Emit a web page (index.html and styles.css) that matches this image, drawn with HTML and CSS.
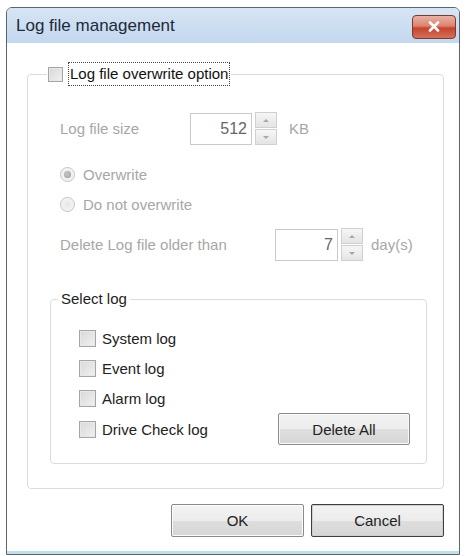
FILE: index.html
```html
<!DOCTYPE html>
<html>
<head>
<meta charset="utf-8">
<title>Log file management</title>
<link rel="stylesheet" href="styles.css">
</head>
<body>
<div class="window">
  <div class="titlebar">
    <span class="title">Log file management</span>
    <span class="close">
      <svg width="12" height="11" viewBox="0 0 12 11"><path d="M2 1.5 L10 9.5 M10 1.5 L2 9.5" stroke="#fff" stroke-width="2.6" stroke-linecap="round"/></svg>
    </span>
  </div>
  <div class="client">
    <fieldset class="group outer">
      <legend class="legend-check"><span class="checkbox"></span><span class="focus">Log file overwrite option</span></legend>

      <div class="row size-row">
        <span class="label label-size">Log file size</span>
        <span class="field field-size">512</span>
        <span class="spin"><span class="spin-btn"><span class="arrow up"></span></span><span class="spin-btn"><span class="arrow down"></span></span></span>
        <span class="unit">KB</span>
      </div>

      <div class="radio-row first"><span class="radio checked"></span><span class="label">Overwrite</span></div>
      <div class="radio-row"><span class="radio"></span><span class="label">Do not overwrite</span></div>

      <div class="row days-row">
        <span class="label label-days">Delete Log file older than</span>
        <span class="field field-days">7</span>
        <span class="spin"><span class="spin-btn"><span class="arrow up"></span></span><span class="spin-btn"><span class="arrow down"></span></span></span>
        <span class="unit">day(s)</span>
      </div>

      <fieldset class="group inner">
        <legend class="legend-text">Select log</legend>
        <div class="check-row"><span class="checkbox"></span><span class="check-label">System log</span></div>
        <div class="check-row"><span class="checkbox"></span><span class="check-label">Event log</span></div>
        <div class="check-row"><span class="checkbox"></span><span class="check-label">Alarm log</span></div>
        <div class="check-row last">
          <div class="check-item"><span class="checkbox"></span><span class="check-label">Drive Check log</span></div>
          <button class="btn btn-delete">Delete All</button>
        </div>
      </fieldset>
    </fieldset>

    <div class="buttons">
      <button class="btn">OK</button>
      <button class="btn btn-default">Cancel</button>
    </div>
  </div>
</div>
</body>
</html>
```

FILE: styles.css
```css
html, body {
  margin: 0;
  padding: 0;
  background: #ffffff;
}

body {
  font-family: "Liberation Sans", Arial, sans-serif;
  font-size: 15px;
  color: #222;
}

.window {
  margin: 7px 0 0 6px;
  width: 452px;
  height: 546px;
  border: 1px solid #5e646c;
  border-radius: 6px 6px 0 0;
  background: #fff;
  box-shadow: inset 0 -3px 0 #bfe0e6;
  display: flex;
  flex-direction: column;
}

.titlebar {
  height: 35px;
  display: flex;
  align-items: center;
  justify-content: space-between;
  padding: 0 3px 0 9px;
  background: linear-gradient(#d6e5f4, #c3d7ee);
  border-radius: 5px 5px 0 0;
}

.title {
  font-size: 17px;
  color: #1e2a3a;
}

.close {
  width: 42px;
  height: 22px;
  border: 1px solid #7b3b30;
  border-radius: 4px;
  background: linear-gradient(#eab1a4 0%, #dc8470 45%, #c7442c 55%, #d4705a 100%);
  display: flex;
  align-items: center;
  justify-content: center;
  margin-top: 2px;
}

.client {
  flex: 1;
  padding: 0 15px 0 20px;
  display: flex;
  flex-direction: column;
}

.group {
  border: 1px solid #dcdcdc;
  border-radius: 4px;
  margin: 0;
  min-width: 0;
}

.outer {
  margin-top: 20px;
  padding: 0 16px 24px 32px;
}

.legend-check {
  margin-left: -13px;
  padding: 0 2px 0 1px;
  display: flex;
  align-items: center;
  color: #111;
}

.legend-check .checkbox {
  margin-right: 6px;
}

.focus {
  outline: 1px dotted #444;
  line-height: 22px;
  padding: 0 1px;
}

.checkbox {
  display: inline-block;
  width: 15px;
  height: 15px;
  box-sizing: border-box;
  border: 1px solid #a5a5a5;
  background: linear-gradient(135deg, #d8d8d8, #f1f1f1);
  box-shadow: inset 0 0 0 1px #e8e8e8;
  flex: none;
}

.label {
  color: #a7a7a7;
}

.row {
  display: flex;
  align-items: center;
  height: 33px;
}

.size-row {
  margin-top: 27px;
}

.label-size {
  width: 130px;
}

.label-days {
  width: 215px;
}

.field {
  width: 62px;
  height: 32px;
  box-sizing: border-box;
  border: 1px solid #c9c9c9;
  background: #fff;
  color: #666;
  text-align: right;
  line-height: 30px;
  padding-right: 4px;
  font-size: 16px;
}

.field-days {
  width: 63px;
}

.spin {
  margin-left: 3px;
  width: 22px;
  display: flex;
  flex-direction: column;
  gap: 1px;
}

.spin-btn {
  height: 14px;
  border: 1px solid #d0d0d0;
  background: linear-gradient(#f6f6f6, #e4e4e4);
  display: flex;
  align-items: center;
  justify-content: center;
}

.arrow {
  width: 0;
  height: 0;
  border-left: 3px solid transparent;
  border-right: 3px solid transparent;
}

.arrow.up {
  border-bottom: 3px solid #a8a8a8;
}

.arrow.down {
  border-top: 3px solid #a8a8a8;
}

.unit {
  margin-left: 12px;
  color: #a7a7a7;
}

.days-row .unit {
  margin-left: 8px;
}

.radio-row {
  display: flex;
  align-items: center;
  height: 20px;
  margin-top: 10px;
}

.radio-row.first {
  margin-top: 19px;
}

.radio {
  width: 15px;
  height: 15px;
  box-sizing: border-box;
  border-radius: 50%;
  border: 1px solid #c4c4c4;
  background: radial-gradient(circle, #e6e6e6 0%, #f4f4f4 70%);
  margin-right: 8px;
  display: flex;
  align-items: center;
  justify-content: center;
}

.radio.checked::after {
  content: "";
  width: 7px;
  height: 7px;
  border-radius: 50%;
  background: radial-gradient(circle at 40% 40%, #c8c8c8, #9a9a9a);
}

.days-row {
  margin-top: 14px;
}

.inner {
  margin: 29px 0 0 -10px;
  padding: 15px 16px 18px 28px;
}

.legend-text {
  margin-left: -21px;
  padding: 0 3px;
  color: #222;
  line-height: 18px;
}

.check-row {
  display: flex;
  align-items: center;
  height: 30px;
}

.check-row .checkbox,
.check-item .checkbox {
  width: 17px;
  height: 17px;
  margin-right: 6px;
}

.check-label {
  color: #222;
}

.check-row.last {
  justify-content: space-between;
  height: 32px;
}

.check-item {
  display: flex;
  align-items: center;
}

.btn {
  font-family: "Liberation Sans", Arial, sans-serif;
  font-size: 15px;
  color: #222;
  width: 133px;
  height: 33px;
  border: 1px solid #8a8a8a;
  border-radius: 2px;
  background: linear-gradient(#f3f3f3 0%, #ececec 50%, #dedede 51%, #d6d6d6 100%);
  box-shadow: inset 0 0 0 1px #fbfbfb;
  padding: 0;
}

.btn-delete {
  width: 132px;
  height: 32px;
}

.btn-default {
  border: 1px solid #3e3e3e;
  box-shadow: inset 0 0 0 1px #cfcfcf;
}

.buttons {
  display: flex;
  justify-content: flex-end;
  gap: 7px;
  margin-top: 15px;
}
```
